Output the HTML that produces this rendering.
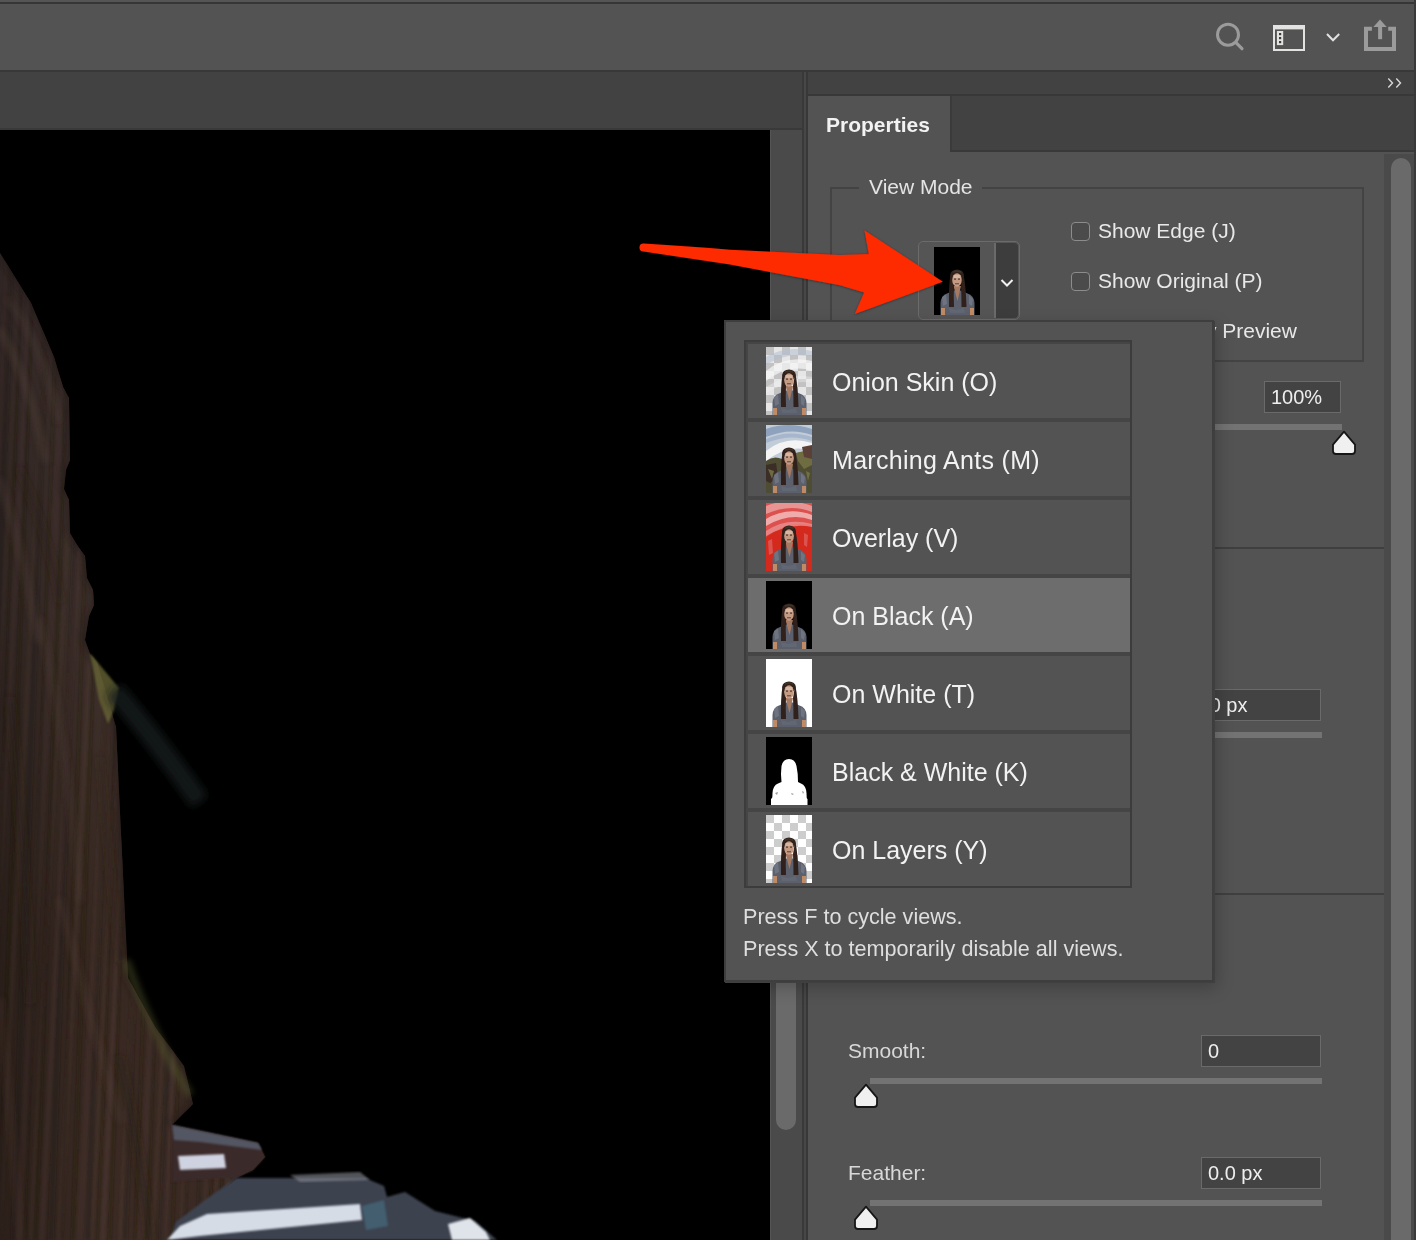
<!DOCTYPE html>
<html><head><meta charset="utf-8">
<style>
*{margin:0;padding:0;box-sizing:border-box}
html,body{width:1416px;height:1240px;overflow:hidden;background:#535353;font-family:"Liberation Sans",sans-serif;}
.a{position:absolute}
.t{position:absolute;white-space:nowrap;line-height:1;-webkit-font-smoothing:antialiased;will-change:transform;}
.chk{position:absolute;width:19px;height:19px;border:1.5px solid #8c8c8c;border-radius:4px;background:#4b4b4b}
.inp{position:absolute;border:1.5px solid #6a6a6a;background:#434343}
.track{position:absolute;height:6px;background:#737373}
.row{position:absolute;left:748px;width:382px;height:74px;background:#535353}
.row .t{left:84px;top:26px;font-size:25px;color:#f2f2f2}
.row svg{position:absolute;left:18px;top:3px}
</style></head>
<body>
<svg width="0" height="0" style="position:absolute">
<defs>
<pattern id="chk" width="16" height="16" patternUnits="userSpaceOnUse"><rect width="16" height="16" fill="#ffffff"/><rect width="8" height="8" fill="#cdcdcd"/><rect x="8" y="8" width="8" height="8" fill="#cdcdcd"/></pattern>
<pattern id="chk2" width="16" height="16" patternUnits="userSpaceOnUse"><rect width="16" height="16" fill="#e6e6e6"/><rect width="8" height="8" fill="#c2c2c2"/><rect x="8" y="8" width="8" height="8" fill="#c2c2c2"/></pattern>
<symbol id="fig" viewBox="0 0 46 68">
  <path d="M6.5 68 L6.5 56 Q7 48.5 13 46.5 L20 43.5 L27 43.5 L33.5 46.5 Q40 48.5 40.5 56 L40.5 68 Z" fill="#5b606c"/>
  <path d="M8 50 L12 47.5 L13 57 L9 59 Z M35 48 L39 52 L38 59 L35 57 Z" fill="#7d8595" opacity="0.55"/>
  <path d="M15 61 L22 63 L30 61 L31 66 L16 66 Z" fill="#6a6f7a" opacity="0.5"/>
  <rect x="7" y="61" width="4" height="7" fill="#bf8b67"/>
  <rect x="36" y="61" width="4" height="7" fill="#bf8b67"/>
  <path d="M19.5 39 L27 39 L23.5 54 Z" fill="#a67a62"/>
  <path d="M16.5 27 Q14.5 40 15 60 L20 60 Q19.5 48 20 39 L18 30 Z" fill="#30211c"/>
  <path d="M29.5 27 Q32 40 32.5 60 L27.5 60 Q27.5 48 27 39 L28.5 30 Z" fill="#30211c"/>
  <ellipse cx="23" cy="28" rx="6.8" ry="5.5" fill="#30211c"/>
  <path d="M18.5 24.5 Q23 22 28 24.5 L27 26 Q23 24 19 26 Z" fill="#4a4430" opacity="0.5"/>
  <ellipse cx="23" cy="33" rx="4.8" ry="6.8" fill="#c49a83"/>
  <rect x="19.5" y="28" width="7" height="3" fill="#e8d2c0" opacity="0.5"/>
  <rect x="20" y="31.5" width="2" height="1.2" fill="#4a3830"/><rect x="24" y="31.5" width="2" height="1.2" fill="#4a3830"/>
  <rect x="21" y="36" width="4" height="1.4" fill="#7a5a50"/>
</symbol>
<symbol id="th-black" viewBox="0 0 46 68"><rect width="46" height="68" fill="#000"/><use href="#fig" width="46" height="68"/></symbol>
<symbol id="th-white" viewBox="0 0 46 68"><rect width="46" height="68" fill="#fff"/><use href="#fig" width="46" height="68"/></symbol>
<symbol id="th-layers" viewBox="0 0 46 68"><rect width="46" height="68" fill="url(#chk)"/><use href="#fig" width="46" height="68"/></symbol>
<symbol id="th-onion" viewBox="0 0 46 68"><rect width="46" height="68" fill="url(#chk2)"/>
  <path d="M0 10 Q20 -2 46 4 L46 10 Q22 4 0 18 Z" fill="#b4c0d2" opacity="0.55"/>
  <path d="M0 24 Q20 8 46 14 L46 24 Q24 16 0 34 Z" fill="#f6f6f6" opacity="0.7"/>
  <path d="M0 40 Q22 26 46 30 L46 36 Q24 32 0 46 Z" fill="#f0f0f0" opacity="0.4"/>
  <use href="#fig" width="46" height="68"/></symbol>
<symbol id="th-ants" viewBox="0 0 46 68"><rect width="46" height="68" fill="#c2ccd8"/>
  <path d="M0 4 Q22 -4 46 4 L46 10 Q24 2 0 12 Z" fill="#8ea2bd"/>
  <path d="M0 14 Q22 4 46 12 L46 16 Q24 8 0 18 Z" fill="#a6b6cc"/>
  <path d="M0 26 Q20 10 46 18 L46 26 Q24 18 0 36 Z" fill="#f4f4f4"/>
  <path d="M0 36 Q8 30 16 34 L30 28 L46 26 L46 68 L0 68 Z" fill="#4e4c32"/>
  <path d="M30 28 L46 24 L46 40 L38 44 L32 36 Z" fill="#6e6c40"/>
  <path d="M0 40 L10 38 L12 52 L4 58 L0 56 Z" fill="#3a2e26"/>
  <path d="M36 22 L46 20 L46 34 L38 32 Z" fill="#5a4036"/>
  <path d="M2 44 L8 46 L6 54 Z M40 46 L44 48 L42 56 Z" fill="#7a7848" opacity="0.8"/>
  <use href="#fig" width="46" height="68"/></symbol>
<symbol id="th-overlay" viewBox="0 0 46 68"><rect width="46" height="68" fill="#d42a1e"/>
  <path d="M0 0 H46 V22 Q24 16 0 34 Z" fill="#e06262" opacity="0.7"/>
  <path d="M0 3 Q22 -6 46 3 L46 9 Q24 0 0 11 Z" fill="#eaa0a0" opacity="0.85"/>
  <path d="M0 16 Q22 3 46 12 L46 17 Q24 9 0 23 Z" fill="#f2b6b6" opacity="0.9"/>
  <path d="M0 28 Q20 14 46 21 L46 24 Q24 19 0 33 Z" fill="#ea9090" opacity="0.8"/>
  <path d="M2 38 L6 36 L7 50 L3 52 Z M38 30 L42 32 L41 44 L38 42 Z" fill="#e07070" opacity="0.6"/>
  <use href="#fig" width="46" height="68"/></symbol>
<symbol id="th-bw" viewBox="0 0 46 68"><rect width="46" height="68" fill="#000"/>
  <path d="M6 68 L6.5 56 Q7 48.5 12 46.5 L15.5 45 Q14.5 36 15.5 29 Q17 22 23 22 Q29 22 30.5 29 Q32 36 32 45 L35 46.5 Q40 48.5 40.5 56 L41 68 Z" fill="#fff"/>
  <path d="M9 56 L12 55 L11 58 Z M25 56 L28 57 L26 58 Z M36 54 L38 55 L37 57 Z" fill="#9a9a9a"/>
  <path d="M5 62 L7 60 L7 68 L5 68 Z M39 60 L41.5 62 L41.5 68 L39.5 68 Z" fill="#fff"/></symbol>
</defs>
</svg>
<!-- top menubar / options bar -->
<div class="a" style="left:0;top:0;width:1416px;height:2px;background:#555555"></div>
<div class="a" style="left:0;top:2px;width:1416px;height:2px;background:#363636"></div>
<div class="a" style="left:0;top:4px;width:1416px;height:66px;background:#535353"></div>
<div class="a" style="left:0;top:70px;width:1416px;height:2px;background:#383838"></div>


<!-- top bar icons -->
<svg class="a" style="left:1200px;top:10px" width="216" height="50" viewBox="1200 10 216 50">
  <circle cx="1228" cy="34.7" r="10.5" fill="none" stroke="#9b9b9b" stroke-width="3"/>
  <path d="M1236.2 42.9 L1242 48.7" stroke="#9b9b9b" stroke-width="3.2" stroke-linecap="round"/>
  <rect x="1274" y="26" width="30" height="24" fill="none" stroke="#e2e2e0" stroke-width="2"/>
  <rect x="1273" y="25" width="32" height="4.4" fill="#e2e2e0"/>
  <rect x="1276.9" y="31" width="6.3" height="14.1" fill="#e2e2e0"/>
  <rect x="1279" y="33" width="2.2" height="2.2" fill="#3a3a3a"/>
  <rect x="1279" y="37" width="2.2" height="2.2" fill="#3a3a3a"/>
  <rect x="1279" y="41" width="2.2" height="2.2" fill="#3a3a3a"/>
  <path d="M1327 34 L1333 40.2 L1339.2 34" fill="none" stroke="#e2e2e2" stroke-width="2"/>
  <path d="M1371.9 28.8 L1366 28.8 L1366 49 L1394 49 L1394 28.8 L1388.2 28.8" fill="none" stroke="#9b9b9b" stroke-width="4"/>
  <rect x="1378.1" y="26" width="4" height="13.2" fill="#9b9b9b"/>
  <path d="M1373.4 27 L1380 19.4 L1386.7 27 Z" fill="#9b9b9b"/>
</svg>

<!-- left document area -->
<div class="a" style="left:0;top:72px;width:802px;height:56px;background:#424242"></div>
<div class="a" style="left:0;top:128px;width:802px;height:2px;background:#393939"></div>
<div class="a" style="left:0;top:130px;width:770px;height:1110px;background:#000"></div>

<!-- canvas image -->
<svg class="a" style="left:0;top:130px" width="770" height="1110" viewBox="0 130 770 1110">
  <defs>
    <linearGradient id="hairg" x1="0" x2="0" y1="250" y2="1240" gradientUnits="userSpaceOnUse">
      <stop offset="0" stop-color="#403230"/><stop offset="0.35" stop-color="#3e302b"/><stop offset="0.7" stop-color="#372821"/><stop offset="1" stop-color="#3a2a23"/>
    </linearGradient>
    <linearGradient id="hairh" x1="0" x2="200" y1="0" y2="0" gradientUnits="userSpaceOnUse">
      <stop offset="0" stop-color="#000" stop-opacity="0.25"/><stop offset="0.5" stop-color="#000" stop-opacity="0"/><stop offset="1" stop-color="#000" stop-opacity="0"/>
    </linearGradient>
    <pattern id="hairstripes" width="61" height="1000" patternUnits="userSpaceOnUse">
      <rect x="0" y="0" width="5" height="1000" fill="#4e3c34"/>
      <rect x="11" y="0" width="4" height="1000" fill="#22171300"/>
      <rect x="19" y="0" width="7" height="1000" fill="#4a3730"/>
      <rect x="33" y="0" width="3" height="1000" fill="#4e3a32"/>
      <rect x="43" y="0" width="5" height="1000" fill="#52403a"/>
    </pattern>
    <pattern id="hairstripes2" width="37" height="1000" patternUnits="userSpaceOnUse">
      <rect x="3" y="0" width="4" height="1000" fill="#1e1512"/>
      <rect x="17" y="0" width="6" height="1000" fill="#241a16"/>
      <rect x="29" y="0" width="3" height="1000" fill="#1e1512"/>
    </pattern>
    <filter id="soft"><feGaussianBlur stdDeviation="1.2"/></filter>
    <filter id="soft3" x="-50%" y="-50%" width="200%" height="200%"><feGaussianBlur stdDeviation="3"/></filter>
    <filter id="soft5" x="-50%" y="-50%" width="200%" height="200%"><feGaussianBlur stdDeviation="5"/></filter>
  </defs>
  <clipPath id="hairclip"><path d="M0 253 L31 303 L54 357 L63 387 L69 398 L70 460 L66 470 L64 489 L69 500 L70 533 L77 545 L85 556 L87 578 L93 590 L94 605 L89 616 L85 640 L90 654 L97 662 L116 727 L121 833 L128 978 L155 1027 L184 1066 L193 1104 L172 1125 L258 1143 L265 1157 L253 1170 L236 1178 L205 1205 L168 1240 L0 1240 Z"/></clipPath>
  <g clip-path="url(#hairclip)">
    <rect x="0" y="240" width="300" height="1000" fill="url(#hairg)"/>
    <g filter="url(#soft)"><rect x="0" y="240" width="300" height="1000" fill="url(#hairstripes)" opacity="0.35" transform="skewX(-3)"/><rect x="0" y="240" width="300" height="1000" fill="url(#hairstripes2)" opacity="0.3" transform="skewX(-2)"/></g>
    <rect x="0" y="240" width="300" height="1000" fill="url(#hairh)"/>
    <g filter="url(#soft3)" fill="none" stroke-linecap="round">
      <path d="M0 330 Q30 380 45 460" stroke="#5c4a40" stroke-width="5" opacity="0.45"/>
      <path d="M8 300 Q40 340 58 420" stroke="#55443b" stroke-width="4" opacity="0.4"/>
      <path d="M0 480 Q25 560 38 640" stroke="#5a473d" stroke-width="5" opacity="0.4"/>
      <path d="M20 470 Q50 540 60 600" stroke="#2a1f1b" stroke-width="6" opacity="0.5"/>
      <path d="M40 620 Q70 760 80 900" stroke="#56423a" stroke-width="5" opacity="0.35"/>
      <path d="M10 700 Q25 850 30 1000" stroke="#2c201c" stroke-width="8" opacity="0.45"/>
      <path d="M60 900 Q90 1020 120 1120" stroke="#584238" stroke-width="5" opacity="0.35"/>
      <path d="M0 1000 Q10 1100 20 1240" stroke="#553f35" stroke-width="5" opacity="0.35"/>
      <path d="M100 760 Q110 880 120 960" stroke="#2e231e" stroke-width="6" opacity="0.4"/>
      <path d="M120 1060 Q140 1150 150 1240" stroke="#2e211c" stroke-width="8" opacity="0.5"/>
    </g>
    <path d="M0 253 L31 303 L54 357 L63 387 L69 398 L70 460 L66 470 L64 489 L69 500 L70 533 L77 545 L85 556 L87 578 L93 590 L94 605 L89 616 L85 640 L90 654 L97 662 L116 727 L121 833 L128 978 L155 1027 L184 1066 L193 1104 L172 1125" fill="none" stroke="#1c1714" stroke-width="6" opacity="0.55" filter="url(#soft3)"/>
  </g>
  <path d="M90 653 L104 670 L119 688 L114 710 L108 724 L99 700 Z" fill="#6c6a38" opacity="0.75" filter="url(#soft)"/>
  <path d="M126 960 Q150 1030 190 1095" stroke="#5c6030" stroke-width="8" fill="none" opacity="0.45" filter="url(#soft3)"/>
  <path d="M114 690 Q160 745 200 802" stroke="#181b1f" stroke-width="20" fill="none" opacity="0.85" filter="url(#soft5)"/>
  <path d="M172 1125 L258 1143 L265 1157 L253 1170 L236 1178 L190 1180 L172 1182 Z" fill="#3a2c2a" filter="url(#soft)"/>
  <path d="M172 1125 L258 1143 L262 1150 L200 1142 L174 1140 Z" fill="#5a6272" opacity="0.8" filter="url(#soft)"/>
  <path d="M178 1156 L224 1154 L226 1168 L180 1170 Z" fill="#cfd2e0" filter="url(#soft)"/>
  <path d="M236 1178 L365 1178 L384 1186 L387 1197 L405 1192 L435 1211 L475 1221 L497 1240 L170 1240 L176 1222 L205 1200 Z" fill="#3c4350" filter="url(#soft)"/>
  <path d="M290 1175 L360 1172 L370 1180 L300 1182 Z" fill="#888c94" opacity="0.6" filter="url(#soft)"/>
  <path d="M207 1214 L360 1204 L362 1220 L200 1236 L167 1240 L180 1226 Z" fill="#d6dce6" filter="url(#soft)"/>
  <path d="M448 1224 L470 1218 L486 1232 L490 1240 L452 1240 Z" fill="#dfe4ea" filter="url(#soft)"/>
  <path d="M362 1206 L384 1200 L388 1226 L366 1230 Z" fill="#4a7c90" opacity="0.5" filter="url(#soft)"/>
</svg>
<div class="a" style="left:770px;top:130px;width:32px;height:1110px;background:#4a4a4a"></div>
<div class="a" style="left:770px;top:130px;width:1px;height:1110px;background:#555"></div>
<div class="a" style="left:776px;top:900px;width:20px;height:230px;background:#6a6a6a;border-radius:10px"></div>

<!-- divider -->
<div class="a" style="left:802px;top:72px;width:2px;height:1168px;background:#393939"></div>
<div class="a" style="left:804px;top:72px;width:2px;height:1168px;background:#474747"></div>
<div class="a" style="left:806px;top:72px;width:2px;height:1168px;background:#383838"></div>

<!-- right panel -->
<div class="a" style="left:808px;top:72px;width:608px;height:22px;background:#424242"></div>
<div class="a" style="left:808px;top:94px;width:608px;height:2px;background:#383838"></div>
<div class="a" style="left:808px;top:96px;width:608px;height:56px;background:#424242"></div>
<div class="a" style="left:950px;top:96px;width:2px;height:56px;background:#3b3b3b"></div>
<div class="a" style="left:950px;top:150px;width:466px;height:2px;background:#393939"></div>
<div class="a" style="left:808px;top:96px;width:142px;height:56px;background:#535353"></div>
<div class="a" style="left:808px;top:152px;width:608px;height:1088px;background:#535353"></div>
<div class="a" style="left:1414px;top:0;width:2px;height:1240px;background:#393939"></div>
<!-- right scrollbar -->
<div class="a" style="left:1384px;top:154px;width:30px;height:1086px;background:#4a4a4a"></div>
<div class="a" style="left:1391px;top:158px;width:20px;height:1100px;background:#6a6a6a;border-radius:10px"></div>

<svg class="a" style="left:1380px;top:72px" width="34" height="22" viewBox="1380 72 34 22"><path d="M1388.3 78.6 L1392.5 83 L1388.3 87.4 M1396.3 78.6 L1400.5 83 L1396.3 87.4" fill="none" stroke="#d8d8d8" stroke-width="1.4"/></svg>
<div class="t" style="left:826px;top:114px;font-size:21px;font-weight:bold;color:#f2f2f2">Properties</div>

<!-- group box -->
<div class="a" style="left:830px;top:187px;width:534px;height:175px;border:2px solid #434343"></div>
<div class="a" style="left:859px;top:180px;width:123px;height:12px;background:#535353"></div>
<div class="t" style="left:869px;top:176px;font-size:21px;color:#e4e4e4">View Mode</div>

<div class="chk" style="left:1071px;top:222px"></div>
<div class="t" style="left:1098px;top:220px;font-size:21px;color:#e8e8e8">Show Edge (J)</div>
<div class="chk" style="left:1071px;top:272px"></div>
<div class="t" style="left:1098px;top:270px;font-size:21px;color:#e8e8e8">Show Original (P)</div>
<div class="t" style="left:1102px;top:320px;font-size:21px;color:#e8e8e8">High Quality Preview</div>

<!-- view mode button -->
<div class="a" style="left:918px;top:241px;width:102px;height:79px;border:1.5px solid #6b6b6b;border-radius:5px;background:#555"></div>
<div class="a" style="left:996px;top:243px;width:22px;height:75px;background:#3d3d3d;border-radius:0 4px 4px 0"></div>
<div class="a" style="left:994px;top:243px;width:2px;height:75px;background:#6b6b6b"></div>
<svg class="a" style="left:934px;top:247px" width="46" height="68"><use width="46" height="68" href="#th-black"/></svg>
<svg class="a" style="left:999px;top:277px" width="16" height="12" viewBox="0 0 16 12"><path d="M2.5 3 L8 8.5 L13.5 3" fill="none" stroke="#f0f0f0" stroke-width="2"/></svg>

<!-- 100% -->
<div class="inp" style="left:1264px;top:381px;width:77px;height:32px"></div>
<div class="t" style="left:1271px;top:387px;font-size:20px;color:#eeeeee">100%</div>
<div class="track" style="left:1214px;top:424px;width:128px"></div>

<div class="a" style="left:1214px;top:547px;width:170px;height:2px;background:#3f3f3f"></div>

<div class="inp" style="left:1150px;top:689px;width:171px;height:32px"></div>
<div class="t" style="left:1193px;top:695px;font-size:20px;color:#eeeeee">0.0 px</div>
<div class="track" style="left:1200px;top:732px;width:122px"></div>
<div class="a" style="left:1214px;top:893px;width:170px;height:2px;background:#3f3f3f"></div>

<!-- smooth / feather -->
<div class="t" style="left:848px;top:1040px;font-size:21px;color:#d8d8d8">Smooth:</div>
<div class="inp" style="left:1201px;top:1035px;width:120px;height:32px"></div>
<div class="t" style="left:1208px;top:1041px;font-size:20px;color:#eeeeee">0</div>
<div class="track" style="left:870px;top:1078px;width:452px"></div>

<div class="t" style="left:848px;top:1162px;font-size:21px;color:#d8d8d8">Feather:</div>
<div class="inp" style="left:1201px;top:1157px;width:120px;height:32px"></div>
<div class="t" style="left:1208px;top:1163px;font-size:20px;color:#eeeeee">0.0 px</div>
<div class="track" style="left:870px;top:1200px;width:452px"></div>

<svg class="a" style="left:1331px;top:430px" width="26" height="26" viewBox="0 0 26 26"><path d="M13 1.6 L24 14.6 L24 21 Q24 24 21 24 L5 24 Q2 24 2 21 L2 14.6 Z" fill="#f0f0f0" stroke="#161616" stroke-width="1.8" stroke-linejoin="round"/></svg>
<svg class="a" style="left:853px;top:1083px" width="26" height="26" viewBox="0 0 26 26"><path d="M13 1.6 L24 14.6 L24 21 Q24 24 21 24 L5 24 Q2 24 2 21 L2 14.6 Z" fill="#f0f0f0" stroke="#161616" stroke-width="1.8" stroke-linejoin="round"/></svg>
<svg class="a" style="left:853px;top:1205px" width="26" height="26" viewBox="0 0 26 26"><path d="M13 1.6 L24 14.6 L24 21 Q24 24 21 24 L5 24 Q2 24 2 21 L2 14.6 Z" fill="#f0f0f0" stroke="#161616" stroke-width="1.8" stroke-linejoin="round"/></svg>


<!-- popup -->
<div class="a" style="left:724px;top:320px;width:490px;height:662px;background:#535353;border:2px solid #3e3e3e;box-shadow:1px 1px 0 #404040, 3px 6px 16px rgba(0,0,0,0.22)"></div>
<div class="a" style="left:744px;top:340px;width:388px;height:548px;background:#454545;border:2px solid #3c3c3c"></div>
<div class="row" style="top:344px"><svg width="46" height="68" viewBox="0 0 46 68"><use width="46" height="68" href="#th-onion"/></svg><div class="t">Onion Skin (O)</div></div>
<div class="row" style="top:422px"><svg width="46" height="68" viewBox="0 0 46 68"><use width="46" height="68" href="#th-ants"/></svg><div class="t" style="letter-spacing:0.3px">Marching Ants (M)</div></div>
<div class="row" style="top:500px"><svg width="46" height="68" viewBox="0 0 46 68"><use width="46" height="68" href="#th-overlay"/></svg><div class="t">Overlay (V)</div></div>
<div class="row" style="top:578px;background:#6d6d6d"><svg width="46" height="68" viewBox="0 0 46 68"><use width="46" height="68" href="#th-black"/></svg><div class="t">On Black (A)</div></div>
<div class="row" style="top:656px"><svg width="46" height="68" viewBox="0 0 46 68"><use width="46" height="68" href="#th-white"/></svg><div class="t">On White (T)</div></div>
<div class="row" style="top:734px"><svg width="46" height="68" viewBox="0 0 46 68"><use width="46" height="68" href="#th-bw"/></svg><div class="t">Black &amp; White (K)</div></div>
<div class="row" style="top:812px"><svg width="46" height="68" viewBox="0 0 46 68"><use width="46" height="68" href="#th-layers"/></svg><div class="t">On Layers (Y)</div></div>

<div class="t" style="left:743px;top:906px;font-size:21.6px;color:#dedede">Press F to cycle views.</div>
<div class="t" style="left:743px;top:938px;font-size:21.6px;color:#dedede">Press X to temporarily disable all views.</div>


<!-- red arrow -->
<svg class="a" style="left:620px;top:210px" width="340" height="120" viewBox="620 210 340 120">
  <defs><filter id="ash" x="-10%" y="-20%" width="120%" height="140%"><feDropShadow dx="0" dy="0.5" stdDeviation="0.8" flood-color="#000" flood-opacity="0.45"/></filter></defs>
  <path d="M643.5 243.6 Q690 246.5 730 249.8 L840 255.1 L868.8 253.9 L864.4 230.3 L942.9 281.8 L854.8 314 L864.1 292.4 L840 285.2 L730 264.6 L643.5 251.6 A4 4 0 0 1 643.5 243.6 Z" fill="#fe2900" filter="url(#ash)"/>
</svg>
</body></html>
